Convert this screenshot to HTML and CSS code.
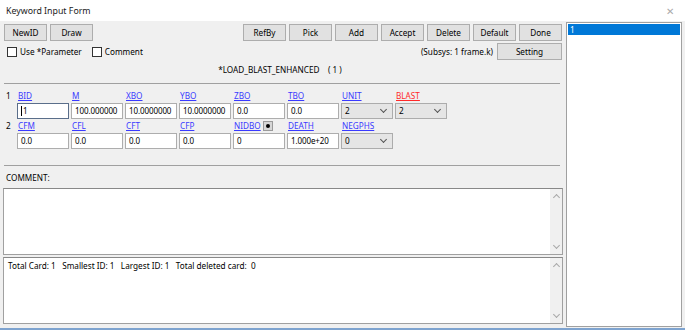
FILE: index.html
```html
<!DOCTYPE html>
<html lang="en">
<head>
    <meta charset="UTF-8">
    <meta name="viewport" content="width=device-width, initial-scale=1.0">
    <title>Keyword Input Form</title>
    <link rel="stylesheet" href="styles.css">
</head>
<body>

    <!-- Window title bar -->
    <div class="titlebar">
        <span class="title">Keyword Input Form</span>
        <span class="close">&#x2715;</span>
    </div>

    <div class="window">
        <div class="form-pane">

            <!-- Top buttons -->
            <div class="toolbar">
                <button class="btn">NewID</button>
                <button class="btn">Draw</button>
                <div class="spacer"></div>
                <button class="btn">RefBy</button>
                <button class="btn">Pick</button>
                <button class="btn">Add</button>
                <button class="btn">Accept</button>
                <button class="btn">Delete</button>
                <button class="btn">Default</button>
                <button class="btn">Done</button>
            </div>

            <div class="options">
                <label class="check"><span class="box"></span>Use *Parameter</label>
                <label class="check"><span class="box"></span>Comment</label>
                <div class="spacer"></div>
                <span class="subsys">(Subsys: 1 frame.k)</span>
                <button class="btn setting">Setting</button>
            </div>

            <div class="keyword">*LOAD_BLAST_ENHANCED&nbsp;&nbsp;&nbsp;&nbsp;( 1 )</div>

            <div class="separator"></div>

            <!-- Card 1 -->
            <div class="card">
                <div class="card-no">1</div>
                <div class="field"><a class="fld-label">BID</a><div class="input focused"><span class="caret"></span>1</div></div>
                <div class="field"><a class="fld-label">M</a><div class="input">100.000000</div></div>
                <div class="field"><a class="fld-label">XBO</a><div class="input">10.0000000</div></div>
                <div class="field"><a class="fld-label">YBO</a><div class="input">10.0000000</div></div>
                <div class="field"><a class="fld-label">ZBO</a><div class="input">0.0</div></div>
                <div class="field"><a class="fld-label">TBO</a><div class="input">0.0</div></div>
                <div class="field"><a class="fld-label">UNIT</a><div class="select">2<span class="chev"></span></div></div>
                <div class="field"><a class="fld-label red">BLAST</a><div class="select">2<span class="chev"></span></div></div>
            </div>

            <!-- Card 2 -->
            <div class="card">
                <div class="card-no">2</div>
                <div class="field"><a class="fld-label">CFM</a><div class="input">0.0</div></div>
                <div class="field"><a class="fld-label">CFL</a><div class="input">0.0</div></div>
                <div class="field"><a class="fld-label">CFT</a><div class="input">0.0</div></div>
                <div class="field"><a class="fld-label">CFP</a><div class="input">0.0</div></div>
                <div class="field"><div class="label-row"><a class="fld-label">NIDBO</a><span class="pick-dot"></span></div><div class="input">0</div></div>
                <div class="field"><a class="fld-label">DEATH</a><div class="input">1.000e+20</div></div>
                <div class="field"><a class="fld-label">NEGPHS</a><div class="select">0<span class="chev"></span></div></div>
            </div>

            <div class="separator lower"></div>

            <div class="comment-label">COMMENT:</div>

            <div class="textbox comment">
                <div class="text"></div>
                <div class="scrollbar"><span class="up"></span><span class="down"></span></div>
            </div>

            <div class="textbox status">
                <div class="text">Total Card: 1&nbsp;&nbsp;&nbsp;Smallest ID: 1&nbsp;&nbsp;&nbsp;Largest ID: 1&nbsp;&nbsp;&nbsp;Total deleted card:&nbsp;&nbsp;0</div>
                <div class="scrollbar"><span class="up"></span><span class="down"></span></div>
            </div>
        </div>

        <!-- ID list -->
        <div class="id-list">
            <div class="id-item selected">1</div>
        </div>
    </div>

</body>
</html>
```

FILE: styles.css
```css
/* General styling */
* {
    margin: 0;
    padding: 0;
    box-sizing: border-box;
    font-family: "Noto Sans", "Open Sans", sans-serif;
}

body {
    width: 685px;
    height: 330px;
    overflow: hidden;
    background-color: #f0f0f0;
    font-size: 8.2px;
    color: #000;
    border-bottom: 2px solid #7ea3cf;
}

.titlebar {
    height: 21px;
    background-color: #ffffff;
    display: flex;
    justify-content: space-between;
    align-items: center;
    padding: 0 11px 0 6px;
}

.title {
    font-size: 8.8px;
    color: #222;
}

.close {
    font-size: 10px;
    color: #aaa;
}

.window {
    display: flex;
    height: 307px;
}

.form-pane {
    width: 563px;
    padding-left: 3px;
}

.spacer {
    flex-grow: 1;
}

.toolbar {
    display: flex;
    gap: 3px;
    padding: 3px 1px 0 1px;
}

.btn {
    width: 43px;
    height: 17px;
    background-color: #e1e1e1;
    border: 1px solid #adadad;
    font-size: 8.2px;
    color: #000;
}

.options {
    display: flex;
    align-items: center;
    height: 17px;
    margin-top: 2px;
    padding: 0 1px 0 4px;
}

.check {
    display: flex;
    align-items: center;
    margin-right: 10px;
}

.box {
    width: 10px;
    height: 10px;
    border: 1px solid #333;
    background-color: #fff;
    margin-right: 3px;
}

.subsys {
    margin-right: 4px;
}

.btn.setting {
    width: 65px;
}

.keyword {
    height: 20px;
    line-height: 20px;
    text-align: center;
    padding-right: 6px;
}

.separator {
    height: 1px;
    background-color: #a0a0a0;
    margin: 3px 3px 0 1px;
}

.separator.lower {
    margin-top: 16px;
}

.card {
    display: flex;
    gap: 2px;
    margin-top: 6px;
}

.card + .card {
    margin-top: 1px;
}

.card-no {
    width: 12px;
    padding-left: 3px;
    line-height: 12px;
}

.field {
    width: 52px;
    display: flex;
    flex-direction: column;
    gap: 1px;
}

.label-row {
    display: flex;
    align-items: center;
    gap: 2px;
    height: 12px;
}

.fld-label {
    color: #3a3aff;
    text-decoration: underline;
    line-height: 12px;
    height: 12px;
    padding-left: 1px;
}

.fld-label.red {
    color: #ff2a2a;
}

.pick-dot {
    width: 10px;
    height: 10px;
    background-color: #d6d6d6;
    border: 1px solid #9a9a9a;
    position: relative;
}

.pick-dot::after {
    content: "";
    position: absolute;
    left: 2px;
    top: 2px;
    width: 4px;
    height: 4px;
    border-radius: 50%;
    background-color: #000;
}

.input {
    height: 16px;
    background-color: #fff;
    border: 1px solid #adadad;
    font-size: 8px;
    letter-spacing: -0.1px;
    line-height: 14px;
    padding-left: 3px;
    white-space: nowrap;
    overflow: hidden;
}

.input.focused {
    border-color: #5a6e8a;
    display: flex;
    align-items: center;
}

.caret {
    width: 1px;
    height: 10px;
    background-color: #000;
    margin-right: 1px;
}

.select {
    height: 16px;
    background-color: #e5e5e5;
    border: 1px solid #acacac;
    line-height: 14px;
    padding-left: 3px;
    position: relative;
}

.chev {
    position: absolute;
    right: 6px;
    top: 3px;
    width: 5px;
    height: 5px;
    border-right: 1px solid #555;
    border-bottom: 1px solid #555;
    transform: rotate(45deg);
}

.comment-label {
    margin-top: 6px;
    padding-left: 3px;
    line-height: 12px;
}

.textbox {
    display: flex;
    width: 560px;
    height: 67px;
    background-color: #fff;
    border: 1px solid #a0a0a0;
    border-top-color: #888;
}

.textbox.comment {
    margin-top: 4px;
}

.textbox.status {
    margin-top: 2px;
}

.textbox .text {
    flex-grow: 1;
    padding: 2px 4px;
}

.scrollbar {
    width: 12px;
    background-color: #f0f0f0;
    position: relative;
}

.scrollbar .up, .scrollbar .down {
    position: absolute;
    left: 4px;
    width: 5px;
    height: 5px;
    border-left: 1px solid #a8a8a8;
    border-top: 1px solid #a8a8a8;
}

.scrollbar .up {
    top: 6px;
    transform: rotate(45deg);
}

.scrollbar .down {
    bottom: 6px;
    transform: rotate(225deg);
}

.id-list {
    width: 116px;
    height: 305px;
    margin-left: 3px;
    margin-top: 1px;
    background-color: #fff;
    border: 1px solid #a0a0a0;
    padding: 1px;
}

.id-item {
    height: 11px;
    line-height: 11px;
    padding-left: 2px;
}

.id-item.selected {
    background-color: #0078d7;
    color: #fff;
}
```
